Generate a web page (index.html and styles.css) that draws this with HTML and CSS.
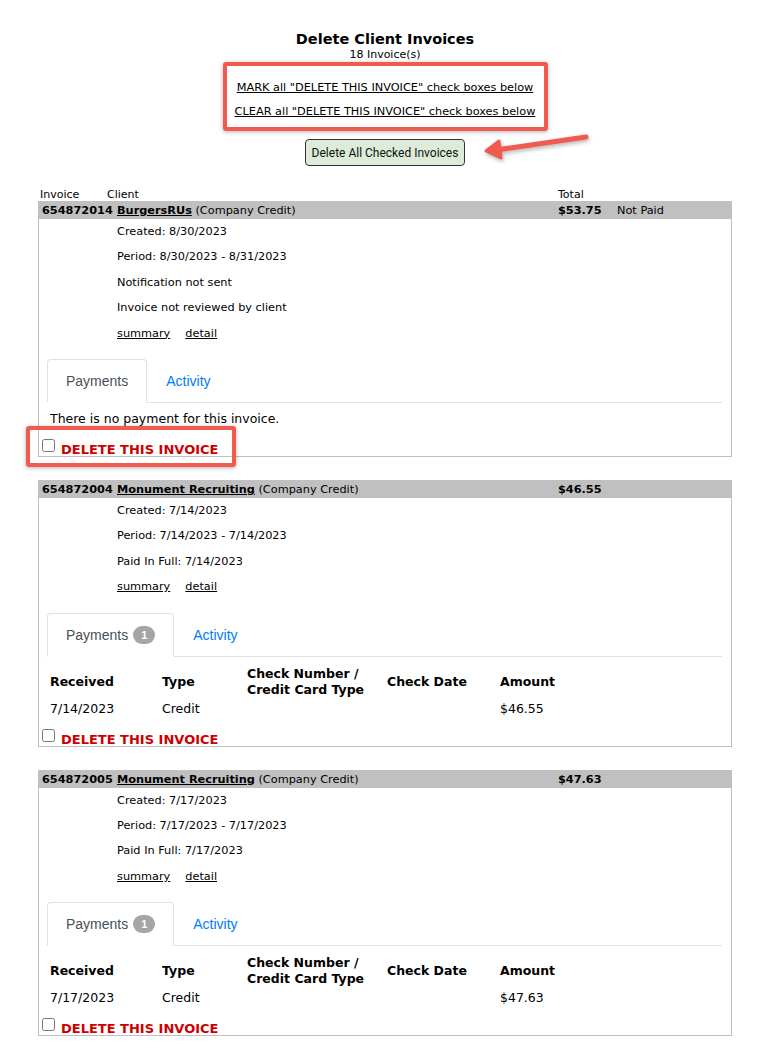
FILE: index.html
```html
<!DOCTYPE html>
<html lang="en">
<head>
  <meta charset="UTF-8" />
  <title>Delete Client Invoices</title>
  <link rel="stylesheet" href="styles.css">
</head>
<body>

  <div class="page">
    <h1 class="title">Delete Client Invoices</h1>
    <div class="count">18 Invoice(s)</div>

    <!-- bulk check box links -->
    <div class="bulk-links callout">
      <a href="#">MARK all "DELETE THIS INVOICE" check boxes below</a>
      <a href="#">CLEAR all "DELETE THIS INVOICE" check boxes below</a>
    </div>

    <div class="bulk-action">
      <button class="delete-btn">Delete All Checked Invoices</button>
    </div>

    <svg class="arrow" width="130" height="45" viewBox="0 0 130 45">
      <line x1="116" y1="12" x2="26" y2="25" stroke="#f15a4e" stroke-width="5" stroke-linecap="round" />
      <polygon points="16,26 29,16 31,33" fill="#f15a4e" stroke="#f15a4e" stroke-width="3" stroke-linejoin="round" />
    </svg>

    <div class="col-labels">
      <span class="lbl-invoice">Invoice</span>
      <span class="lbl-client">Client</span>
      <span class="lbl-total">Total</span>
    </div>

    <!-- invoice 1 -->
    <div class="invoice">
      <div class="inv-head">
        <span class="inv-no">654872014</span>
        <span class="inv-client"><a href="#">BurgersRUs</a> (Company Credit)</span>
        <span class="inv-total">$53.75</span>
        <span class="inv-status">Not Paid</span>
      </div>
      <div class="inv-details">
        <div>Created: 8/30/2023</div>
        <div>Period: 8/30/2023 - 8/31/2023</div>
        <div>Notification not sent</div>
        <div>Invoice not reviewed by client</div>
        <div class="inv-docs"><a href="#">summary</a><a href="#">detail</a></div>
      </div>
      <ul class="tabs">
        <li class="tab active">Payments</li>
        <li class="tab">Activity</li>
      </ul>
      <div class="no-payment">There is no payment for this invoice.</div>
      <label class="delete-row">
        <input type="checkbox" />
        <span class="delete-text">DELETE THIS INVOICE</span>
        <span class="callout delete-callout"></span>
      </label>
    </div>

    <!-- invoice 2 -->
    <div class="invoice">
      <div class="inv-head">
        <span class="inv-no">654872004</span>
        <span class="inv-client"><a href="#">Monument Recruiting</a> (Company Credit)</span>
        <span class="inv-total">$46.55</span>
        <span class="inv-status"></span>
      </div>
      <div class="inv-details">
        <div>Created: 7/14/2023</div>
        <div>Period: 7/14/2023 - 7/14/2023</div>
        <div>Paid In Full: 7/14/2023</div>
        <div class="inv-docs"><a href="#">summary</a><a href="#">detail</a></div>
      </div>
      <ul class="tabs">
        <li class="tab active">Payments <span class="badge">1</span></li>
        <li class="tab">Activity</li>
      </ul>
      <div class="payments">
        <div class="pay-head">Received</div>
        <div class="pay-head">Type</div>
        <div class="pay-head">Check Number /<br>Credit Card Type</div>
        <div class="pay-head">Check Date</div>
        <div class="pay-head">Amount</div>
        <div>7/14/2023</div>
        <div>Credit</div>
        <div></div>
        <div></div>
        <div>$46.55</div>
      </div>
      <label class="delete-row">
        <input type="checkbox" />
        <span class="delete-text">DELETE THIS INVOICE</span>
      </label>
    </div>

    <!-- invoice 3 -->
    <div class="invoice">
      <div class="inv-head">
        <span class="inv-no">654872005</span>
        <span class="inv-client"><a href="#">Monument Recruiting</a> (Company Credit)</span>
        <span class="inv-total">$47.63</span>
        <span class="inv-status"></span>
      </div>
      <div class="inv-details">
        <div>Created: 7/17/2023</div>
        <div>Period: 7/17/2023 - 7/17/2023</div>
        <div>Paid In Full: 7/17/2023</div>
        <div class="inv-docs"><a href="#">summary</a><a href="#">detail</a></div>
      </div>
      <ul class="tabs">
        <li class="tab active">Payments <span class="badge">1</span></li>
        <li class="tab">Activity</li>
      </ul>
      <div class="payments">
        <div class="pay-head">Received</div>
        <div class="pay-head">Type</div>
        <div class="pay-head">Check Number /<br>Credit Card Type</div>
        <div class="pay-head">Check Date</div>
        <div class="pay-head">Amount</div>
        <div>7/17/2023</div>
        <div>Credit</div>
        <div></div>
        <div></div>
        <div>$47.63</div>
      </div>
      <label class="delete-row">
        <input type="checkbox" />
        <span class="delete-text">DELETE THIS INVOICE</span>
      </label>
    </div>
  </div>

</body>
</html>
```

FILE: styles.css
```css
* {
  box-sizing: border-box;
}

body {
  margin: 0;
  background-color: #fff;
  color: #000;
  font-family: "DejaVu Sans", Verdana, sans-serif;
  font-size: 11.3px;
}

a {
  color: #000;
}

.page {
  position: relative;
  width: 694px;
  margin-left: 38px;
  padding: 30px 0 40px;
}

.title {
  margin: 0;
  text-align: center;
  font-size: 14.5px;
  line-height: 18px;
  font-weight: bold;
}

.count {
  text-align: center;
  line-height: 13px;
  font-size: 11px;
}

/* red annotation boxes */
.callout {
  border: 4px solid #f15a4e;
  border-radius: 3px;
  box-shadow: 0 1px 4px rgba(0, 0, 0, 0.3);
}

.bulk-links {
  display: flex;
  flex-direction: column;
  align-items: center;
  width: 325px;
  margin: 1px auto 0;
  padding: 10px 0 3px;
}

.bulk-links a {
  line-height: 24px;
}

.bulk-action {
  display: flex;
  justify-content: center;
  margin-top: 8px;
}

.delete-btn {
  height: 27px;
  width: 160px;
  padding: 0;
  background-color: #dcecd9;
  border: 1px solid #333;
  border-radius: 4px;
  font-family: Roboto, "Liberation Sans", sans-serif;
  font-size: 12px;
  color: #111;
}

.arrow {
  position: absolute;
  left: 432px;
  top: 125px;
  filter: drop-shadow(1px 2px 2px rgba(0, 0, 0, 0.3));
}

.col-labels {
  display: flex;
  margin-top: 22px;
  line-height: 13px;
  font-size: 11px;
}

.lbl-invoice {
  margin-left: 2px;
  width: 67px;
}

.lbl-client {
  width: 451px;
}

/* invoice box */
.invoice {
  border: 1px solid #c0c0c0;
  margin-bottom: 23px;
}

.inv-head {
  display: flex;
  background-color: #c0c0c0;
  line-height: 17px;
  padding-left: 3px;
}

.inv-no {
  width: 75px;
  font-weight: bold;
}

.inv-client {
  width: 441px;
}

.inv-client a {
  font-weight: bold;
}

.inv-total {
  width: 59px;
  font-weight: bold;
}

.inv-details {
  padding-left: 78px;
  line-height: 25.4px;
}

.inv-docs {
  display: flex;
  gap: 15px;
}

.tabs {
  display: flex;
  list-style: none;
  margin: 13px 9px 0 8px;
  padding: 0;
  border-bottom: 1px solid #dee2e6;
  font-family: "Liberation Sans", Arial, sans-serif;
  font-size: 14px;
}

.tab {
  display: flex;
  align-items: center;
  padding: 11px 18px;
  line-height: 20px;
  border: 1px solid transparent;
  border-radius: 4px 4px 0 0;
  margin-bottom: -1px;
  color: #007bff;
}

.tab.active {
  color: #495057;
  background-color: #fff;
  border-color: #dee2e6 #dee2e6 #fff;
}

.badge {
  display: inline-flex;
  align-items: center;
  justify-content: center;
  width: 22px;
  height: 18px;
  margin-left: 5px;
  border-radius: 9px;
  background-color: #a5a5a5;
  color: #fff;
  font-size: 11px;
  font-weight: bold;
}

.no-payment {
  margin: 8px 0 0 11px;
  font-size: 12.5px;
  line-height: 16px;
}

.payments {
  display: grid;
  grid-template-columns: 112px 85px 140px 113px 1fr;
  row-gap: 3px;
  margin: 9px 0 0 11px;
  font-size: 12.5px;
  line-height: 16px;
}

.pay-head {
  display: flex;
  align-items: center;
  font-weight: bold;
}

.delete-row {
  position: relative;
  display: flex;
  align-items: flex-start;
  margin-top: 12px;
  height: 17px;
  font-size: 13px;
  font-weight: bold;
  color: #cc0000;
}

.delete-row input {
  width: 13px;
  height: 13px;
  margin: 0 6px 0 3px;
}

.delete-text {
  padding-top: 3px;
  line-height: 16px;
}

.delete-callout {
  position: absolute;
  left: -13px;
  top: -13px;
  width: 210px;
  height: 41px;
}
```
